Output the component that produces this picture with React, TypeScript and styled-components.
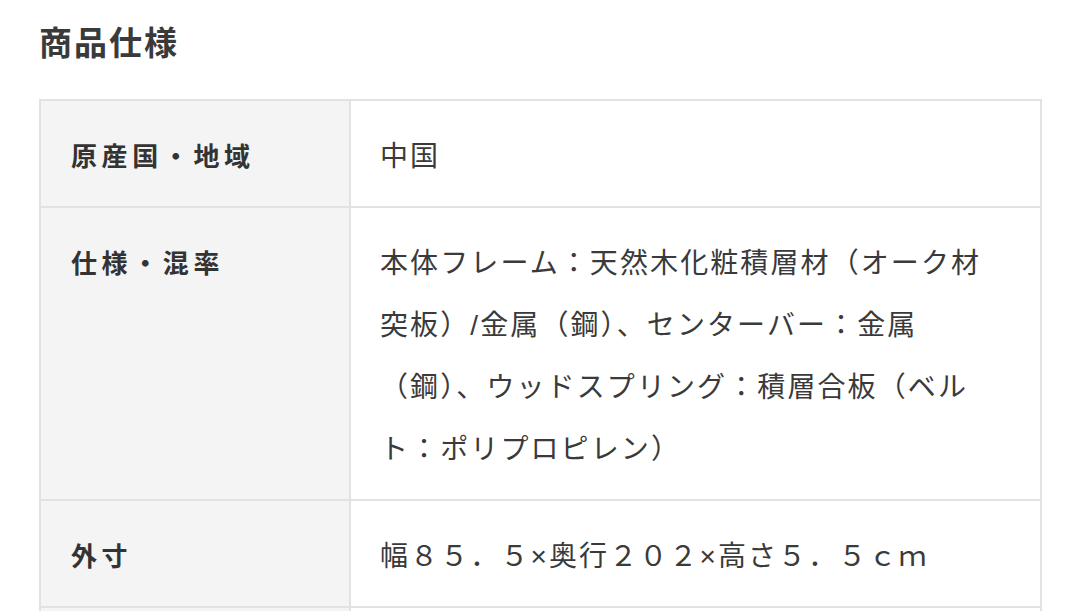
import styled, { createGlobalStyle } from "styled-components";

const GlobalStyle = createGlobalStyle`
  html, body {
    margin: 0;
    padding: 0;
    background: #ffffff;
    overflow: hidden;
  }
  body {
    font-family: "Liberation Sans", "Noto Sans CJK JP", sans-serif;
    color: #333333;
  }
`;

const Page = styled.div`
  padding: 22px 39px 0 39px;
`;

const Title = styled.h2`
  margin: 0 0 33px 0;
  font-size: 33px;
  line-height: 44px;
  font-weight: 700;
  letter-spacing: 2px;
  color: #3a3a3a;
`;

const SpecTable = styled.table`
  width: 1003px;
  border-collapse: collapse;
  table-layout: fixed;
`;

const Label = styled.th`
  width: 247px;
  padding: 25px 31px 18px 30px;
  background: #f4f4f4;
  border: 2px solid #e2e2e2;
  text-align: left;
  vertical-align: top;
  font-size: 26px;
  line-height: 62px;
  font-weight: 700;
  letter-spacing: 4.6px;
  color: #333333;
`;

const Value = styled.td`
  padding: 25px 32px 18px 29px;
  border: 2px solid #e2e2e2;
  vertical-align: top;
  font-size: 28px;
  line-height: 62px;
  font-weight: 400;
  letter-spacing: 2.1px;
  color: #3a3a3a;
`;

const specs = [
  { label: "原産国・地域", value: "中国" },
  {
    label: "仕様・混率",
    value:
      "本体フレーム：天然木化粧積層材（オーク材突板）/金属（鋼）、センターバー：金属（鋼）、ウッドスプリング：積層合板（ベルト：ポリプロピレン）",
  },
  { label: "外寸", value: "幅８５．５×奥行２０２×高さ５．５ｃｍ" },
  { label: "", value: "" },
];

const App = () => {
  return (
    <Page>
      <GlobalStyle />
      <Title>商品仕様</Title>
      <SpecTable>
        <tbody>
          {specs.map((spec, i) => (
            <tr key={i}>
              <Label>{spec.label || "\u00a0"}</Label>
              <Value>{spec.value || "\u00a0"}</Value>
            </tr>
          ))}
        </tbody>
      </SpecTable>
    </Page>
  );
};

export default App;
